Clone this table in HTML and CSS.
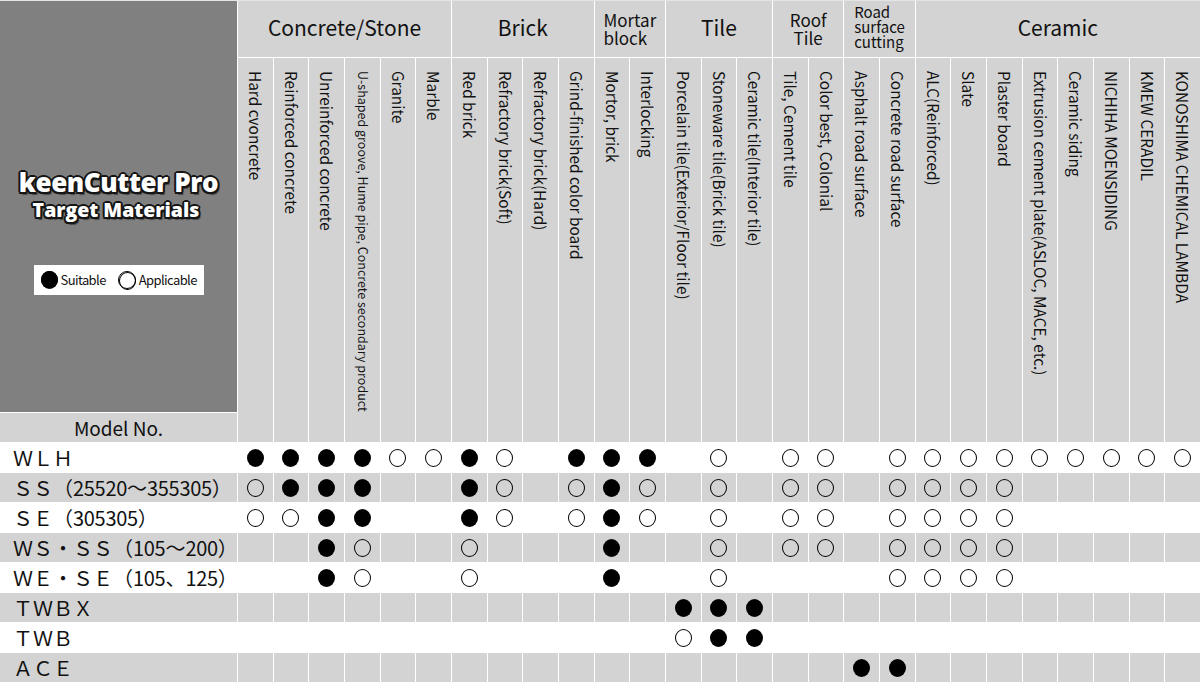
FILE: index.html
```html
<!DOCTYPE html>
<html lang="en">
<head>
<meta charset="utf-8">
<title>keenCutter Pro Target Materials</title>
<link rel="stylesheet" href="styles.css">
</head>
<body>
<div class="chart">
  <div class="panel">
    <div class="logo1">keenCutter Pro</div>
    <div class="logo2">Target Materials</div>
    <div class="legend">
      <span class="lg f"></span><span class="lt">Suitable</span>
      <span class="lg o"></span><span class="lt">Applicable</span>
    </div>
  </div>
  <div class="mh">Model No.</div>

  <div class="grp s6">Concrete/Stone</div>
  <div class="grp s4">Brick</div>
  <div class="grp s2 two"><span class="left">Mortar<br>block</span></div>
  <div class="grp s3">Tile</div>
  <div class="grp s2 two"><span>Roof<br>Tile</span></div>
  <div class="grp s2 three"><span class="left">Road<br>surface<br>cutting</span></div>
  <div class="grp s8">Ceramic</div>

  <div class="sub"><span>Hard cvoncrete</span></div>
  <div class="sub"><span>Reinforced concrete</span></div>
  <div class="sub"><span>Unreinforced concrete</span></div>
  <div class="sub"><span class="small">U-shaped groove, Hume pipe, Concrete secondary product</span></div>
  <div class="sub"><span>Granite</span></div>
  <div class="sub"><span>Marble</span></div>
  <div class="sub"><span>Red brick</span></div>
  <div class="sub"><span>Refractory brick(Soft)</span></div>
  <div class="sub"><span>Refractory brick(Hard)</span></div>
  <div class="sub"><span>Grind-finished color board</span></div>
  <div class="sub"><span>Mortor, brick</span></div>
  <div class="sub"><span>Interlocking</span></div>
  <div class="sub"><span>Porcelain tile(Exterior/Floor tile)</span></div>
  <div class="sub"><span>Stoneware tile(Brick tile)</span></div>
  <div class="sub"><span>Ceramic tile(Interior tile)</span></div>
  <div class="sub"><span>Tile, Cement tile</span></div>
  <div class="sub"><span>Color best, Colonial</span></div>
  <div class="sub"><span>Asphalt road surface</span></div>
  <div class="sub"><span>Concrete road surface</span></div>
  <div class="sub"><span>ALC(Reinforced)</span></div>
  <div class="sub"><span>Slate</span></div>
  <div class="sub"><span>Plaster board</span></div>
  <div class="sub"><span>Extrusion cement plate(ASLOC, MACE, etc.)</span></div>
  <div class="sub"><span>Ceramic siding</span></div>
  <div class="sub"><span>NICHIHA MOENSIDING</span></div>
  <div class="sub"><span>KMEW CERADIL</span></div>
  <div class="sub"><span>KONOSHIMA CHEMICAL LAMBDA</span></div>

  <div class="row w">
    <div class="name">ＷＬＨ</div>
    <div class="f"></div><div class="f"></div><div class="f"></div><div class="f"></div><div class="o"></div><div class="o"></div>
    <div class="f"></div><div class="o"></div><div></div><div class="f"></div>
    <div class="f"></div><div class="f"></div>
    <div></div><div class="o"></div><div></div>
    <div class="o"></div><div class="o"></div>
    <div></div><div class="o"></div>
    <div class="o"></div><div class="o"></div><div class="o"></div><div class="o"></div><div class="o"></div><div class="o"></div><div class="o"></div><div class="o"></div>
  </div>
  <div class="row g">
    <div class="name">ＳＳ（<span class="num">25520</span>～<span class="num">355305</span>）</div>
    <div class="o"></div><div class="f"></div><div class="f"></div><div class="f"></div><div></div><div></div>
    <div class="f"></div><div class="o"></div><div></div><div class="o"></div>
    <div class="f"></div><div class="o"></div>
    <div></div><div class="o"></div><div></div>
    <div class="o"></div><div class="o"></div>
    <div></div><div class="o"></div>
    <div class="o"></div><div class="o"></div><div class="o"></div><div></div><div></div><div></div><div></div><div></div>
  </div>
  <div class="row w">
    <div class="name">ＳＥ（<span class="num">305305</span>）</div>
    <div class="o"></div><div class="o"></div><div class="f"></div><div class="f"></div><div></div><div></div>
    <div class="f"></div><div class="o"></div><div></div><div class="o"></div>
    <div class="f"></div><div class="o"></div>
    <div></div><div class="o"></div><div></div>
    <div class="o"></div><div class="o"></div>
    <div></div><div class="o"></div>
    <div class="o"></div><div class="o"></div><div class="o"></div><div></div><div></div><div></div><div></div><div></div>
  </div>
  <div class="row g">
    <div class="name">ＷＳ・ＳＳ（<span class="num">105</span>～<span class="num">200</span>）</div>
    <div></div><div></div><div class="f"></div><div class="o"></div><div></div><div></div>
    <div class="o"></div><div></div><div></div><div></div>
    <div class="f"></div><div></div>
    <div></div><div class="o"></div><div></div>
    <div class="o"></div><div class="o"></div>
    <div></div><div class="o"></div>
    <div class="o"></div><div class="o"></div><div class="o"></div><div></div><div></div><div></div><div></div><div></div>
  </div>
  <div class="row w">
    <div class="name">ＷＥ・ＳＥ（<span class="num">105</span>、<span class="num">125</span>）</div>
    <div></div><div></div><div class="f"></div><div class="o"></div><div></div><div></div>
    <div class="o"></div><div></div><div></div><div></div>
    <div class="f"></div><div></div>
    <div></div><div class="o"></div><div></div>
    <div></div><div></div>
    <div></div><div class="o"></div>
    <div class="o"></div><div class="o"></div><div class="o"></div><div></div><div></div><div></div><div></div><div></div>
  </div>
  <div class="row g">
    <div class="name">ＴＷＢＸ</div>
    <div></div><div></div><div></div><div></div><div></div><div></div>
    <div></div><div></div><div></div><div></div>
    <div></div><div></div>
    <div class="f"></div><div class="f"></div><div class="f"></div>
    <div></div><div></div>
    <div></div><div></div>
    <div></div><div></div><div></div><div></div><div></div><div></div><div></div><div></div>
  </div>
  <div class="row w">
    <div class="name">ＴＷＢ</div>
    <div></div><div></div><div></div><div></div><div></div><div></div>
    <div></div><div></div><div></div><div></div>
    <div></div><div></div>
    <div class="o"></div><div class="f"></div><div class="f"></div>
    <div></div><div></div>
    <div></div><div></div>
    <div></div><div></div><div></div><div></div><div></div><div></div><div></div><div></div>
  </div>
  <div class="row g">
    <div class="name">ＡＣＥ</div>
    <div></div><div></div><div></div><div></div><div></div><div></div>
    <div></div><div></div><div></div><div></div>
    <div></div><div></div>
    <div></div><div></div><div></div>
    <div></div><div></div>
    <div class="f"></div><div class="f"></div>
    <div></div><div></div><div></div><div></div><div></div><div></div><div></div><div></div>
  </div>
</div>
</body>
</html>
```

FILE: styles.css
```css
html, body {
  margin: 0;
  padding: 0;
  background: #fff;
}

body {
  font-family: "Noto Sans CJK JP", "Noto Sans", sans-serif;
  color: #111;
}

.chart {
  display: grid;
  grid-template-columns: 237px repeat(27, 1fr);
  grid-template-rows: 56px 354px 29px repeat(8, 29px);
  gap: 1px;
  width: 1200px;
  height: 681px;
  border-top: 1px solid #e4e4e4;
  background: #fff;
}

/* left panel */
.panel {
  grid-column: 1;
  grid-row: 1 / 3;
  background: #808080;
  display: flex;
  flex-direction: column;
  align-items: center;
  padding-top: 168px;
}

.logo1,
.logo2 {
  font-family: "Open Sans", "Lato", sans-serif;
  font-weight: 800;
  color: #fff;
  line-height: 1;
  text-shadow:
    -2px 0 #151515, 2px 0 #151515, 0 -2px #151515, 0 2px #151515,
    -1.5px -1.5px #151515, 1.5px -1.5px #151515, -1.5px 1.5px #151515, 1.5px 1.5px #151515,
    2px 3px 1px rgba(0, 0, 0, 0.45);
}

.logo1 {
  font-size: 26px;
  letter-spacing: -0.4px;
}

.logo2 {
  font-size: 19.5px;
  letter-spacing: 0;
  margin-top: 5px;
  margin-right: 5px;
}

.legend {
  margin-top: 45px;
  width: 170px;
  height: 30px;
  box-sizing: border-box;
  background: #fff;
  display: flex;
  align-items: center;
  padding-left: 7px;
  font-size: 13px;
  letter-spacing: -0.6px;
  color: #111;
}

.lg {
  display: block;
  width: 17px;
  height: 17px;
  box-sizing: border-box;
  border-radius: 50%;
}

.lg.f {
  background: #000;
}

.lg.o {
  width: 18px;
  height: 18px;
  border: 1.3px solid #000;
  margin-left: 12px;
}

.lt {
  margin-left: 3px;
}

.mh {
  grid-column: 1;
  grid-row: 3;
  background: #d3d3d3;
  font-size: 19px;
  line-height: 29px;
  text-align: center;
}

/* group headers */
.grp {
  grid-row: 1;
  background: #d3d3d3;
  display: flex;
  align-items: center;
  justify-content: center;
  font-size: 21px;
  line-height: 1;
  padding-bottom: 3px;
}

.s2 { grid-column: span 2; }
.s3 { grid-column: span 3; }
.s4 { grid-column: span 4; }
.s6 { grid-column: span 6; }
.s8 { grid-column: span 8; }

.grp.two {
  font-size: 17px;
  line-height: 17.5px;
  text-align: center;
  padding-bottom: 1px;
}

.grp.three {
  font-size: 15px;
  line-height: 15px;
  padding-bottom: 5px;
}

.grp .left {
  text-align: left;
}

/* vertical sub headers */
.sub {
  grid-row: 2 / span 2;
  background: #d3d3d3;
  display: flex;
  justify-content: center;
  padding-top: 13px;
}

.sub span {
  writing-mode: vertical-rl;
  white-space: nowrap;
  font-size: 15.4px;
  line-height: 1;
}

.sub span.small {
  font-size: 12.5px;
}

/* data rows */
.row {
  display: contents;
}

.row > div {
  display: flex;
  align-items: center;
  justify-content: center;
}

.row.g > div {
  background: #d3d3d3;
}

.row > .name {
  justify-content: flex-start;
  padding-left: 13px;
  font-size: 20px;
  white-space: nowrap;
}

.num {
  letter-spacing: -0.3px;
}

.f::before,
.o::before {
  content: "";
  display: block;
  width: 17px;
  height: 18px;
  box-sizing: border-box;
  border-radius: 50%;
}

.f::before {
  background: #000;
}

.o::before {
  border: 1.3px solid #000;
}
```
